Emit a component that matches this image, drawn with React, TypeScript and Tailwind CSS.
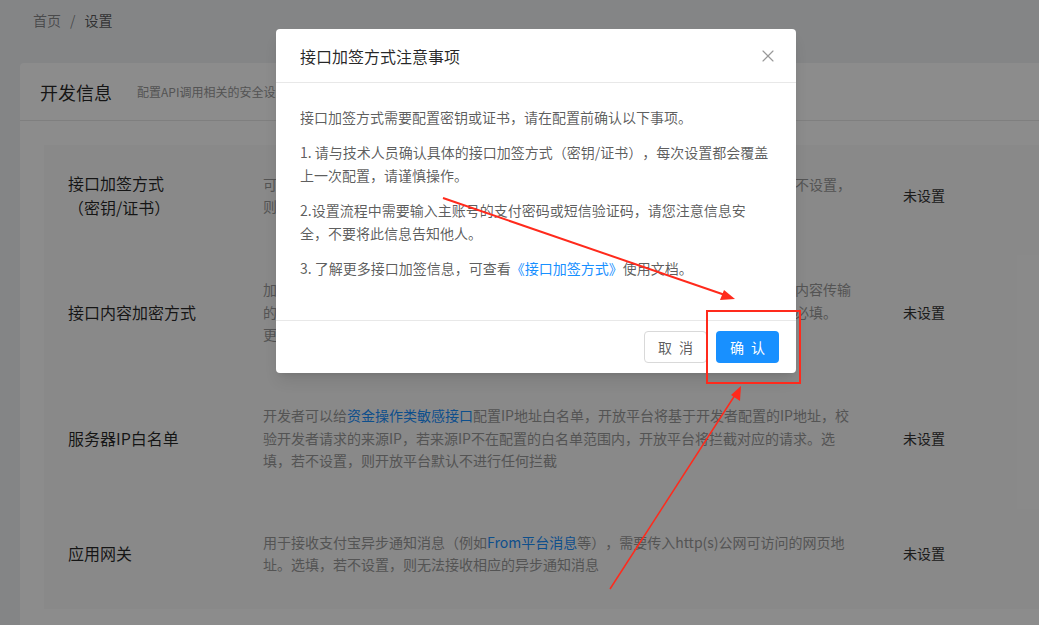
import { X } from 'lucide-react';

const font = { fontFamily: '"Noto Sans CJK SC", "Noto Sans", sans-serif' };

type Row = {
  label: string[];
  lines: React.ReactNode[];
  height: string;
};

const link = 'text-[#1890ff]';

const rows: Row[] = [
  {
    label: ['接口加签方式', '（密钥/证书）'],
    lines: [
      '可选择公钥证书或公钥方式进行接口加签，用于验证开放平台请求的安全性。选填，若不设置，',
      '则开放平台默认使用公钥方式进行接口加签。',
    ],
    height: 'h-[100px]',
  },
  {
    label: ['接口内容加密方式'],
    lines: [
      '加密方式用于对开放平台接口的请求与响应内容进行加密处理，可有效保障敏感数据的内容传输',
      '的安全性。设置后开放平台将使用对应的加密密钥对接口的内容进行加密与解密操作，必填。',
      '更多信息请查看接口内容加密方式说明文档',
    ],
    height: 'h-[134px]',
  },
  {
    label: ['服务器IP白名单'],
    lines: [
      <>开发者可以给<span className={link}>资金操作类敏感接口</span>配置IP地址白名单，开放平台将基于开发者配置的IP地址，校</>,
      '验开发者请求的来源IP，若来源IP不在配置的白名单范围内，开放平台将拦截对应的请求。选',
      '填，若不设置，则开放平台默认不进行任何拦截',
    ],
    height: 'h-[118px]',
  },
  {
    label: ['应用网关'],
    lines: [
      <>用于接收支付宝异步通知消息（例如<span className={link}>From平台消息</span>等），需要传入http(s)公网可访问的网页地</>,
      '址。选填，若不设置，则无法接收相应的异步通知消息',
    ],
    height: 'h-[112px]',
  },
];

function SettingRow({ row }: { row: Row }) {
  return (
    <div className={`flex items-center pl-6 ${row.height}`}>
      <div className="w-[195px] shrink-0 text-base leading-6 text-black/85">
        {row.label.map((l) => (
          <div key={l}>{l}</div>
        ))}
      </div>
      <div className="w-[590px] shrink-0 text-sm leading-[22.5px] text-[#999]">
        {row.lines.map((l, i) => (
          <div key={i} className="whitespace-nowrap">{l}</div>
        ))}
      </div>
      <div className="ml-[50px] text-sm text-[#333]">未设置</div>
    </div>
  );
}

export default function App() {
  return (
    <div
      className="relative w-[1039px] h-[625px] overflow-hidden bg-[#f0f2f5] [text-spacing-trim:space-all]"
      style={font}
    >
      {/* breadcrumb */}
      <div className="h-[41px] pt-[9px] pl-[33px] text-sm leading-[22px] flex gap-[9px]">
        <span className="text-black/45">首页</span>
        <span className="text-black/45">/</span>
        <span className="text-black/65">设置</span>
      </div>

      <div className="ml-5 mt-[22px] w-[1100px] rounded bg-white">
        <div className="h-[58px] border-b border-[#e8e8e8] px-5 flex items-center">
          <span className="text-lg text-black/85">开发信息</span>
          <span className="ml-[25px] text-xs text-[#999]">配置API调用相关的安全设置，包括接口加签方式、内容加密方式、IP白名单及应用网关</span>
        </div>
        <div className="pt-6 pl-6 pb-6">
          <div className="bg-[#fafafa]">
            {rows.map((r, i) => (
              <SettingRow key={i} row={r} />
            ))}
          </div>
        </div>
      </div>

      {/* mask */}
      <div className="absolute inset-0 bg-black/45" />

      {/* modal */}
      <div className="absolute left-[276px] top-[29px] w-[520px] rounded bg-white shadow-lg">
        <div className="h-[54px] border-b border-[#e8e8e8] pl-6 pr-[18px] flex items-center justify-between">
          <span className="text-base text-black/85">接口加签方式注意事项</span>
          <X className="w-5 h-5 text-[#999]" strokeWidth={1.4} />
        </div>
        <div className="px-6 pt-[23px] pb-[40px] text-sm leading-[23px] text-black/65 space-y-3">
          <p>接口加签方式需要配置密钥或证书，请在配置前确认以下事项。</p>
          <p>1. 请与技术人员确认具体的接口加签方式（密钥/证书），每次设置都会覆盖上一次配置，请谨慎操作。</p>
          <p>2.设置流程中需要输入主账号的支付密码或短信验证码，请您注意信息安全，不要将此信息告知他人。</p>
          <p>
            3. 了解更多接口加签信息，可查看<span className="text-[#1890ff]">《接口加签方式》</span>使用文档。
          </p>
        </div>
        <div className="h-[53px] border-t border-[#e8e8e8] pr-[17px] flex items-center justify-end gap-[9px]">
          <button className="w-[63px] h-8 pl-[2px] rounded border border-[#d9d9d9] bg-white text-sm tracking-[2px] text-black/65">
            取 消
          </button>
          <button className="w-[63px] h-8 pl-[2px] rounded bg-[#1890ff] text-sm tracking-[2px] text-white">
            确 认
          </button>
        </div>
      </div>

      {/* annotations */}
      <svg className="absolute inset-0 pointer-events-none" width="1039" height="625" viewBox="0 0 1039 625">
        <rect x="707" y="311" width="93" height="72" fill="none" stroke="#ff2a1c" strokeWidth="2" />
        <line x1="443" y1="198" x2="725" y2="295" stroke="#ff2a1c" strokeWidth="2" />
        <polygon points="735,299 720,300 724,290" fill="#ff2a1c" />
        <line x1="610" y1="589" x2="737" y2="392" stroke="#ff2a1c" strokeWidth="1.5" />
        <polygon points="741,386 740,401 731,395" fill="#ff2a1c" />
      </svg>
    </div>
  );
}
